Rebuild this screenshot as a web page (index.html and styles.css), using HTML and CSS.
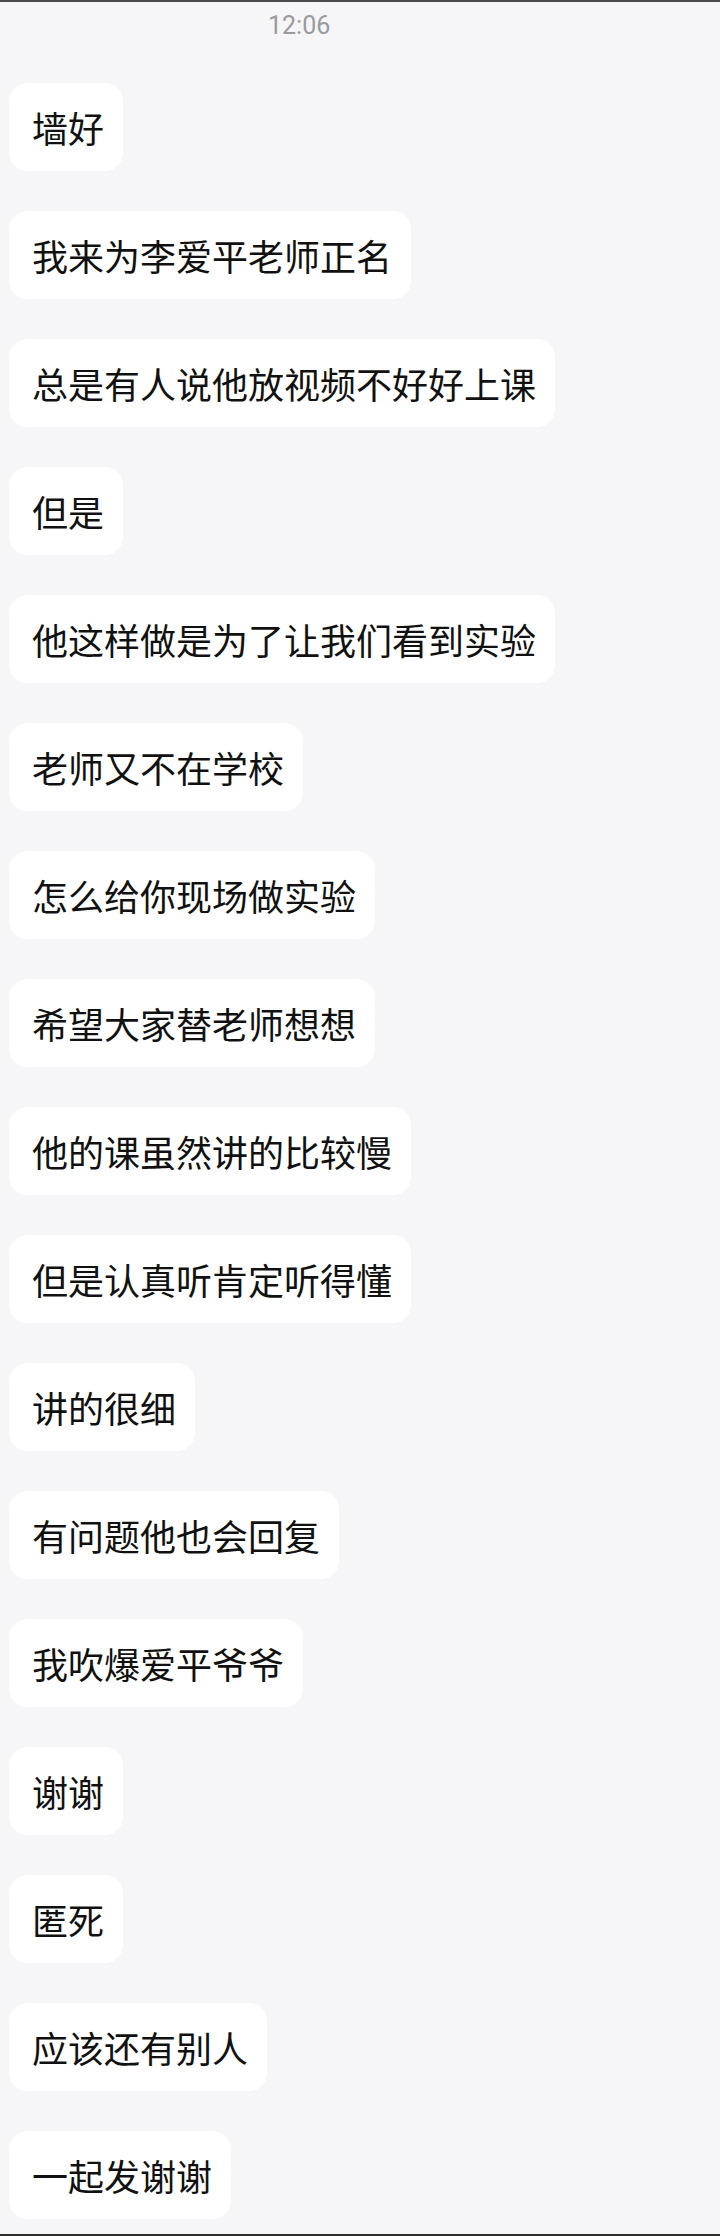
FILE: index.html
```html
<!DOCTYPE html>
<html lang="zh-CN">
<head>
<meta charset="utf-8">
<title>聊天记录</title>
<link rel="stylesheet" href="styles.css">
</head>
<body>
<div class="chat">
  <div class="time">12:06</div>
  <div class="messages">
    <div class="bubble">墙好</div>
    <div class="bubble">我来为李爱平老师正名</div>
    <div class="bubble">总是有人说他放视频不好好上课</div>
    <div class="bubble">但是</div>
    <div class="bubble">他这样做是为了让我们看到实验</div>
    <div class="bubble">老师又不在学校</div>
    <div class="bubble">怎么给你现场做实验</div>
    <div class="bubble">希望大家替老师想想</div>
    <div class="bubble">他的课虽然讲的比较慢</div>
    <div class="bubble">但是认真听肯定听得懂</div>
    <div class="bubble">讲的很细</div>
    <div class="bubble">有问题他也会回复</div>
    <div class="bubble">我吹爆爱平爷爷</div>
    <div class="bubble">谢谢</div>
    <div class="bubble">匿死</div>
    <div class="bubble">应该还有别人</div>
    <div class="bubble">一起发谢谢</div>
  </div>
</div>
</body>
</html>
```

FILE: styles.css
```css
html, body {
  margin: 0;
  padding: 0;
}

body {
  background: #f6f5f8;
  font-family: "Noto Sans CJK SC", "Noto Sans", sans-serif;
}

.chat {
  box-sizing: border-box;
  height: 2236px;
  border-top: 2px solid #4a4a4a;
  border-bottom: 2px solid #2e2e2e;
  padding-top: 9px;
  display: flex;
  flex-direction: column;
  overflow: hidden;
}

.time {
  margin-left: 268px;
  font-family: Roboto, "Liberation Sans", sans-serif;
  font-size: 25px;
  line-height: 30px;
  color: #9b9a9d;
}

.messages {
  margin-top: 42px;
  display: flex;
  flex-direction: column;
  align-items: flex-start;
  gap: 40px;
  padding-left: 9px;
}

.bubble {
  background: #ffffff;
  border-radius: 18px;
  padding: 20px 19px 20px 23px;
  font-size: 36px;
  line-height: 48px;
  color: #111111;
  white-space: nowrap;
}
```
